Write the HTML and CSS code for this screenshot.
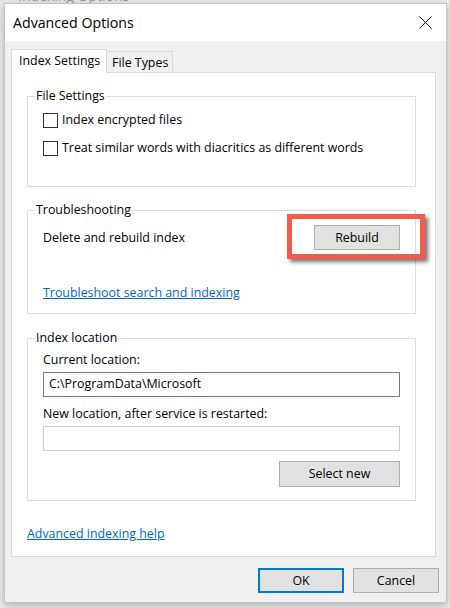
FILE: index.html
```html
<!DOCTYPE html>
<html>
<head>
<meta charset="utf-8">
<link rel="stylesheet" href="styles.css">
</head>
<body>
<div class="bg-title">Indexing Options</div>
<div class="dialog">
  <div class="titlebar">
    <span class="title">Advanced Options</span>
    <svg class="close" width="13" height="13" viewBox="0 0 13 13"><path d="M0.5 0.5 L12.5 12.5 M12.5 0.5 L0.5 12.5" stroke="#000" stroke-width="1" fill="none"/></svg>
  </div>
  <div class="content">
    <div class="tabs">
      <div class="tab active">Index Settings</div>
      <div class="tab">File Types</div>
    </div>
    <div class="panel">
      <fieldset class="group g1">
        <legend>File Settings</legend>
        <label class="check"><span class="box"></span>Index encrypted files</label>
        <label class="check"><span class="box"></span>Treat similar words with diacritics as different words</label>
      </fieldset>
      <fieldset class="group g2">
        <legend>Troubleshooting</legend>
        <div class="row">
          <span>Delete and rebuild index</span>
          <span class="btn-wrap"><button class="btn rebuild">Rebuild</button><span class="highlight"></span></span>
        </div>
        <a class="link trouble" href="#">Troubleshoot search and indexing</a>
      </fieldset>
      <fieldset class="group g3">
        <legend>Index location</legend>
        <div class="label first">Current location:</div>
        <div class="field">C:\ProgramData\Microsoft</div>
        <div class="label">New location, after service is restarted:</div>
        <div class="field disabled"></div>
        <div class="actions"><button class="btn select">Select new</button></div>
      </fieldset>
      <a class="link help" href="#">Advanced indexing help</a>
    </div>
    <div class="footer">
      <button class="btn ok">OK</button>
      <button class="btn cancel">Cancel</button>
    </div>
  </div>
</div>
</body>
</html>
```
FILE: styles.css
```css
* { box-sizing: border-box; }
html, body { margin: 0; padding: 0; }
body {
  width: 450px;
  height: 608px;
  overflow: hidden;
  background: #ececec;
  font-family: "Open Sans", "Noto Sans", sans-serif;
  font-size: 12.4px;
  line-height: 16px;
  color: #000;
  position: relative;
}
.bg-title {
  position: absolute;
  left: 18px;
  top: -12px;
  font-size: 14px;
  color: #9a9a9a;
}
.dialog {
  position: relative;
  margin: 3px 0 0 4px;
  width: 443px;
  height: 600px;
  border: 1px solid #c4c4c4;
  background: #f0f0f0;
  box-shadow: 0 2px 8px rgba(0,0,0,0.28);
}
.titlebar {
  height: 37px;
  background: #fff;
  display: flex;
  align-items: center;
  justify-content: space-between;
  padding: 0 14px 0 8px;
}
.title {
  font-size: 14.2px;
  line-height: 18px;
}
.close { display: block; }
.content {
  padding: 8px 0 0 6px;
}
.tabs {
  display: flex;
  align-items: flex-end;
  margin-bottom: -1px;
  position: relative;
  z-index: 1;
}
.tab {
  height: 21px;
  width: 66px;
  padding: 3px 0 0 5px;
  border: 1px solid #d9d9d9;
  border-left: none;
  border-bottom: none;
  background: #f0f0f0;
  margin-bottom: 1px;
  white-space: nowrap;
}
.tab.active {
  height: 24px;
  width: 96px;
  padding: 3px 0 0 7px;
  border-left: 1px solid #d9d9d9;
  background: #fff;
  margin-bottom: 0;
}
.panel {
  width: 425px;
  height: 485px;
  background: #fff;
  border: 1px solid #d9d9d9;
  padding: 15px 19px 0 15px;
}
.group {
  margin: 0;
  padding: 0 15px;
  border: 1px solid #dcdcdc;
  min-width: 0;
}
.group legend {
  padding: 0 1px;
  margin-left: -8px;
  line-height: 16px;
}
.g1 { padding-top: 8px; padding-bottom: 30px; }
.check {
  display: flex;
  align-items: center;
  height: 16px;
}
.check + .check { margin-top: 12px; }
.box {
  width: 15px;
  height: 15px;
  border: 1px solid #333;
  background: #fff;
  margin-right: 4px;
  flex: none;
}
.g2 { margin-top: 15px; padding-top: 7px; padding-bottom: 12px; }
.row {
  display: flex;
  align-items: center;
  justify-content: space-between;
  height: 25px;
}
.btn-wrap { position: relative; display: block; }
.btn {
  font-family: inherit;
  font-size: 12.4px;
  line-height: 16px;
  color: #000;
  background: #e1e1e1;
  border: 1px solid #adadad;
  padding: 0;
  margin: 0;
  display: block;
}
.rebuild { width: 86px; height: 25px; }
.highlight {
  position: absolute;
  top: -11px;
  left: -27px;
  right: -25px;
  bottom: -9px;
  border: 5px solid #f55a4e;
  box-shadow: 3px 3px 4px rgba(0,0,0,0.55);
}
.link {
  display: block;
  color: #0066cc;
  text-decoration: underline;
  width: max-content;
}
.trouble { margin-top: 35px; }
.g3 { margin-top: 16px; padding-top: 6px; padding-bottom: 13px; }
.label { margin-top: 9px; }
.label.first { margin-top: 0; }
.field {
  margin-top: 4px;
  height: 25px;
  border: 1px solid #7a7a7a;
  padding: 3px 0 0 5px;
  background: #fff;
}
.field.disabled { border-color: #cccccc; }
.actions {
  margin-top: 10px;
  display: flex;
  justify-content: flex-end;
}
.select { width: 121px; height: 26px; }
.help { margin-top: 25px; }
.footer {
  display: flex;
  justify-content: flex-end;
  gap: 9px;
  padding: 11px 7px 0 0;
}
.ok, .cancel { width: 86px; height: 25px; }
.ok { border: 2px solid #0078d7; }
```
